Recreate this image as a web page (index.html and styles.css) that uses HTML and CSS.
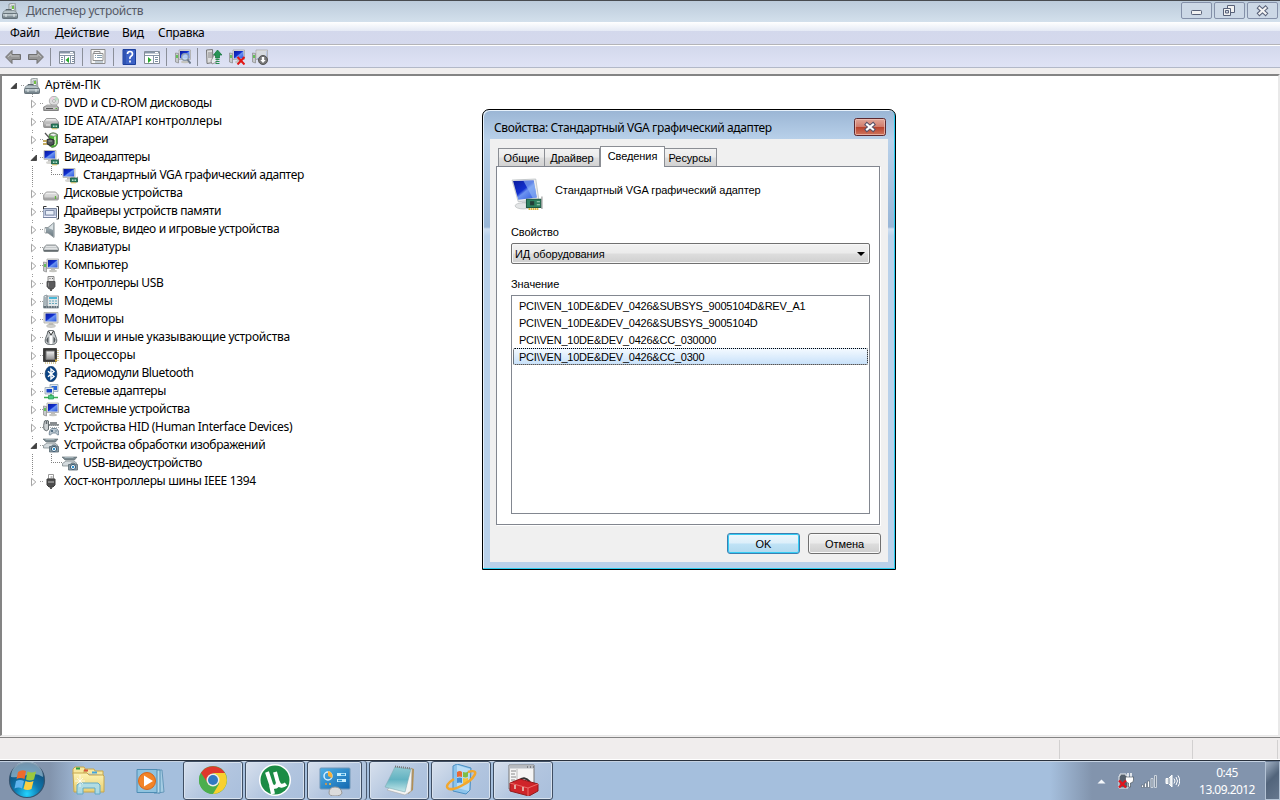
FILE: index.html
```html
<!DOCTYPE html>
<html lang="ru">
<head>
<meta charset="utf-8">
<title>Диспетчер устройств</title>
<link rel="stylesheet" href="styles.css">
</head>
<body>
<svg class="defs" width="0" height="0">
<defs>
<linearGradient id="gScr" x1="0" y1="0" x2="1" y2="1"><stop offset="0" stop-color="#0a1a9a"/><stop offset=".45" stop-color="#1230d0"/><stop offset=".55" stop-color="#6c93f0"/><stop offset="1" stop-color="#2a55e0"/></linearGradient>
<linearGradient id="gGray" x1="0" y1="0" x2="0" y2="1"><stop offset="0" stop-color="#f4f4f4"/><stop offset="1" stop-color="#8f8f8f"/></linearGradient>
<linearGradient id="gSteel" x1="0" y1="0" x2="0" y2="1"><stop offset="0" stop-color="#b9c6cc"/><stop offset="1" stop-color="#66757d"/></linearGradient>
<radialGradient id="gOrb" cx=".5" cy=".9" r=".9"><stop offset="0" stop-color="#23d4ff"/><stop offset=".4" stop-color="#0e78ae"/><stop offset="1" stop-color="#123e66"/></radialGradient>
<linearGradient id="gFold" x1="0" y1="0" x2="0" y2="1"><stop offset="0" stop-color="#fdf3b4"/><stop offset="1" stop-color="#e9cf72"/></linearGradient>
<linearGradient id="gNote" x1="0" y1="0" x2="0" y2="1"><stop offset="0" stop-color="#8fc9d2"/><stop offset=".5" stop-color="#63b3c2"/><stop offset="1" stop-color="#c5e8ea"/></linearGradient>
<linearGradient id="gPanel" x1="0" y1="0" x2="1" y2="1"><stop offset="0" stop-color="#4fb0e6"/><stop offset="1" stop-color="#1268b0"/></linearGradient>
</defs>
<symbol id="pc" viewBox="0 0 16 16"><path d="M7 1l6-1 1 10-7 1z" fill="#e4e6e4" stroke="#7b8588" stroke-width=".8"/><path d="M9 3l3-.5.4 5-3 .5z" fill="#fff" stroke="#9aa"/><rect x="10" y="3" width="2" height="3" fill="#74c043"/><path d="M4 8V6.500h5V8" fill="none" stroke="#59666c"/><path d="M1 9l2-1.500h9l3 2.500v1H1z" fill="#b5c1c6" stroke="#738087" stroke-width=".6"/><rect x=".5" y="10.500" width="15" height="5" rx=".8" fill="url(#gSteel)" stroke="#556269" stroke-width=".8"/><path d="M1 12h14" stroke="#d6e0e2" stroke-width=".7"/><path d="M4 11v3M12 11v3" stroke="#e8eeee"/></symbol>
<symbol id="card" viewBox="0 0 8 7"><path d="M.5 1.500h7v4h-7z" fill="#2b8060" stroke="#195844" stroke-width=".8"/><path d="M2 3h1.500v1.500H2zM4.500 3H6v1.500H4.500z" fill="#b9dccb"/><path d="M1 6.500h5" stroke="#dcb838"/><path d="M7.500 0v2" stroke="#888"/></symbol>
<symbol id="mon" viewBox="0 0 16 16"><path d="M1 .5h14v10.500H1z" fill="#e5e5df" stroke="#aaaaa3" stroke-width=".8"/><path d="M2.500 1.500h11v8h-11z" fill="url(#gScr)"/><path d="M6 11h4l.7 2H5.300z" fill="#bcbcb5"/><ellipse cx="8" cy="14" rx="4.500" ry="1.400" fill="#d6d6cf" stroke="#aaa" stroke-width=".6"/></symbol>
<symbol id="vga" viewBox="0 0 16 16"><path d="M1 .5h12v9H1z" fill="#dbdbd6" stroke="#b2b2ae" stroke-width=".8"/><path d="M1.500 1h10.500v7.500H1.500z" fill="url(#gScr)"/><path d="M5 10h4v2H5z" fill="#bbb"/><ellipse cx="7" cy="12.500" rx="4" ry="1.500" fill="#d6d6d2"/><use href="#card" x="8" y="8.500" width="8" height="7"/></symbol>
<symbol id="dvd" viewBox="0 0 16 16"><circle cx="11" cy="5" r="4.700" fill="#dededf" stroke="#999" stroke-width=".7"/><path d="M11 5l2-4.200A4.700 4.700 0 0 1 15.300 4z" fill="#b9e3c1"/><path d="M11 5L7.300 2.500 10 .6z" fill="#f0cde0"/><circle cx="11" cy="5" r="1.400" fill="#fff" stroke="#888" stroke-width=".6"/><path d="M1 11l3-2h9l2.500 2v3.500H.6V11z" fill="#c6c6c6" stroke="#888" stroke-width=".7"/><path d="M1 11h14v3.500H1z" fill="url(#gGray)" stroke="#777" stroke-width=".7"/><path d="M3 12.500h7" stroke="#555"/><path d="M12.500 12.500H14" stroke="#54b637"/></symbol>
<symbol id="ide" viewBox="0 0 16 16"><path d="M.6 8l2.800-3.500h9.200L15.400 8v4.500q0 1-1 1H1.600q-1 0-1-1z" fill="url(#gGray)" stroke="#858585" stroke-width=".8"/><path d="M1 8h14" stroke="#aaa" stroke-width=".6"/><path d="M3 11h4" stroke="#eee"/><use href="#card" x="8" y="8.500" width="8" height="7"/></symbol>
<symbol id="bat" viewBox="0 0 16 16"><path d="M6 2.500Q10-1 14.500 2.500v9Q13 15.500 9 15.500l-3-2z" fill="#4db238" stroke="#4e6d45" stroke-width=".7"/><path d="M6.500 3Q10-.5 14 3q-3 2.500-7.500 0z" fill="#f1f4f1" stroke="#777" stroke-width=".6"/><path d="M11 4.800l2-.5v8.200l-2 1z" fill="#c8f0af"/><path d="M4 7.500q3-1.500 7 .5v4q-3 3-7 0z" fill="#52575b" stroke="#292c2e"/><path d="M2 1l4 4.500M5.500 8.500l4 0" fill="none" stroke="#555" stroke-width="1.200"/><path d="M5.500 9h3.500" stroke="#a1a7aa"/><path d="M0 9h4M0 12h4" stroke="#b19132" stroke-width="1.300"/></symbol>
<symbol id="disk" viewBox="0 0 16 16"><path d="M.6 9l2.800-3h9.200l2.800 3v4q0 1-1 1H1.600q-1 0-1-1z" fill="#eee" stroke="#888" stroke-width=".8"/><path d="M1 9h14v4.500H1z" fill="url(#gGray)" stroke="#999" stroke-width=".5"/><path d="M12.500 10v3" stroke="#62b23d" stroke-width="1.300"/></symbol>
<symbol id="mem" viewBox="0 0 16 16"><path d="M0 4.500h13.500v9H0z" fill="#bcc6db" stroke="#7885a0"/><path d="M2.500 6.500h8.500v4.500H2.500z" fill="#e8eef8" stroke="#8490ac"/><path d="M13.500 2.500h2v12.500h-2M.5 5V2.500h3" fill="none" stroke="#333"/><path d="M1 12.500h12" stroke="#eef"/></symbol>
<symbol id="snd" viewBox="0 0 16 16"><path d="M2 5.500h3L11 .5v15L5 11H2z" fill="url(#gSteel)" stroke="#858d91" stroke-width=".8"/><path d="M5.500 6L10 2v6z" fill="#dbe2e5"/><path d="M2.500 6.500v4" stroke="#eee"/><path d="M11 1v14" stroke="#aeb7bb"/></symbol>
<symbol id="kbd" viewBox="0 0 16 16"><path d="M.5 9q0-2 3-4h9q3 2 3 4v1.500q0 1-1 1h-13q-1 0-1-1z" fill="#c6cacc" stroke="#777e82" stroke-width=".8"/><path d="M3.500 6.500h9M2.500 8.500h11" stroke="#fff" stroke-dasharray="1 1"/><path d="M1 10.700h14" stroke="#656c70" stroke-width="1.400"/></symbol>
<symbol id="comp" viewBox="0 0 16 16"><path d="M4 1h11.500v9.500H4z" fill="#e3e3df" stroke="#aaa" stroke-width=".8"/><path d="M5 2h9.500v7.500H5z" fill="url(#gScr)"/><path d="M8 10.500h4V13H8z" fill="#bbb"/><ellipse cx="10" cy="13" rx="4" ry="1.200" fill="#c5c5c0"/><path d="M.5 4l3 .5V14l-3-1z" fill="#c7cacc" stroke="#888" stroke-width=".7"/><path d="M2 6v3" stroke="#43bc35" stroke-width="1.500"/></symbol>
<symbol id="usb" viewBox="0 0 16 16"><path d="M5 .5h6V6H5z" fill="#e5e5e5" stroke="#888"/><path d="M6.500 2.500h1M9 2.500h1" stroke="#666"/><path d="M4 5.500h8v5l-2 2.500H6l-2-2.500z" fill="#5a5a5c" stroke="#424244" stroke-width=".8"/><path d="M5.500 6.500v4" stroke="#8d8d8d"/><path d="M8 13v2" stroke="#555" stroke-width="2"/></symbol>
<symbol id="modem" viewBox="0 0 16 16"><path d="M1 2l3-1v12H.5zM4 2h11.500v12H.5v-2H4z" fill="#e2e7e9" stroke="#7d8b93" stroke-width=".8"/><path d="M6 3h8v2H6z" fill="#4bb7d7"/><path d="M6 7h8M6 9.500h8" stroke="#69a9bd" stroke-width="1.200" stroke-dasharray="2 1"/><path d="M1 13h14" stroke="#637179" stroke-width="2" stroke-dasharray="2 .6"/><path d="M2 3v8" stroke="#9aa7ad" stroke-width="1.500"/></symbol>
<symbol id="mouse" viewBox="0 0 16 16"><path d="M5 1q3-1.500 6 0 .5 3 2.500 7.500c1 4-1 5.800-3.500 5.800H6c-3 0-4.500-1.800-3.500-5.800Q4.500 4 5 1z" fill="#c9cdcf" stroke="#62696d"/><path d="M5.500 1l2.500 4 2.500-4" fill="#fff" stroke="#333"/><path d="M3.500 9L5.500 6.500v6.500Q3 12 3.500 9zM12.500 9l-2-2.500v6.500q2-1 2-4z" fill="#535a5e"/><path d="M8 6v8" stroke="#fff" stroke-width="2.500"/></symbol>
<symbol id="cpu" viewBox="0 0 16 16"><path d="M.5.5h13v13H.5z" fill="#393938" stroke="#444"/><path d="M3 3h8.500v8.500H3z" fill="url(#gGray)" stroke="#777"/><path d="M15 2v12M2 15h12" stroke="#b59c3e" stroke-dasharray="1 1"/><path d="M12 12.500h2" stroke="#d7ae37" stroke-width="2"/></symbol>
<symbol id="bt" viewBox="0 0 16 16"><ellipse cx="8" cy="8" rx="5.900" ry="7.700" fill="#0a4486" stroke="#113058" stroke-width=".6"/><path d="M5 5.200l6 5.300-3 2.500V3l3 2.500-6 5.300" fill="none" stroke="#fff" stroke-width="1.400"/></symbol>
<symbol id="net" viewBox="0 0 16 16"><path d="M7 .5h8v7H7z" fill="#dee7ed" stroke="#8ca1b1" stroke-width=".7"/><path d="M8.500 2H14v4H8.500z" fill="#2767db"/><path d="M2 3.500h8.500v6.500H2z" fill="#e4ebef" stroke="#889aa8" stroke-width=".7"/><path d="M3.500 5H9v3.500H3.500z" fill="#1643c7"/><path d="M8 10v3M1 13.500h14" stroke="#3dae50" stroke-width="1.600"/><path d="M5.500 11.500h5v3.500h-5z" fill="#48ca80" stroke="#2b9656" stroke-width=".7"/></symbol>
<symbol id="hid" viewBox="0 0 16 16"><path d="M1.500 1q2-1.500 4 0v8.500Q3.500 12 1 9.500 0 6 1.500 1z" fill="#ccd0d2" stroke="#62696c"/><path d="M3.500 1v3M7 3h7M6 5h10" stroke="#61686c" stroke-width="1.500"/><path d="M7 5.500h9M7 7.500h9" stroke="#abb1b4" stroke-dasharray="1 1"/><path d="M6.500 15c-1-2 1-6.500 2.500-6.500h4c2 0 3.500 4.500 2.300 6.500-.8.800-1.800-2-2.800-2H10c-1 0-2.500 2.500-3.500 2z" fill="#bac7d0" stroke="#5f7586" stroke-width=".8"/><path d="M9 10v2M8 11h2M13 10.500v1" stroke="#30506b"/></symbol>
<symbol id="img" viewBox="0 0 16 16"><path d="M0 1h15l-2.500 3H3z" fill="#7c8a90" stroke="#59666b" stroke-width=".6"/><path d="M2.500 1.500h9" stroke="#a6b5bb"/><path d="M.5 7.500L4 5h8l3 2.500-2 1H7V10H.5z" fill="#d4dadd" stroke="#737e83" stroke-width=".7"/><path d="M6.500 8.500h2l1-1.500h3l1 1.500h2V14h-9z" fill="#8b9ba4" stroke="#586871" stroke-width=".8"/><circle cx="11" cy="11" r="2.600" fill="#fff" stroke="#385972"/><circle cx="11" cy="11" r="1.200" fill="#2b8ecb"/></symbol>
<symbol id="fire" viewBox="0 0 16 16"><path d="M5.500.5h5V5h-5z" fill="#fff" stroke="#999"/><path d="M7.500 2h2v2h-2z" fill="#bbb"/><path d="M4 5h8v6l-2 2H6l-2-2z" fill="#4c4c4d" stroke="#3e3e3e"/><path d="M5 8h6" stroke="#c1c1c1"/><path d="M8 13v2" stroke="#555" stroke-width="2"/></symbol>
<symbol id="closed" viewBox="0 0 8 10"><path d="M1.500 1.200L5.800 5 1.500 8.800z" fill="#fff" stroke="#a3a3a3"/></symbol>
<symbol id="open" viewBox="0 0 8 10"><path d="M6.500 2v5.500H1z" fill="#404040" stroke="#262626" stroke-width=".7"/></symbol>
</svg>

<div class="desktop">
  <header class="titlebar">
    <svg class="i16"><use href="#pc"/></svg><span>Диспетчер устройств</span>
    <div class="winbtns">
      <svg viewBox="0 0 31 17"><rect class="wb" x=".5" y=".5" width="30" height="16" rx="1.500"/><rect x="10.500" y="8.500" width="10" height="4" rx=".8" fill="#f1f1f1" stroke="#586178"/></svg>
      <svg viewBox="0 0 31 17"><rect class="wb" x=".5" y=".5" width="30" height="16" rx="1.500"/><path d="M13.500 3.500h7v7h-7z" fill="#f1f1f1" stroke="#586178"/><path d="M9.500 6.500h7v7h-7z" fill="#f1f1f1" stroke="#586178"/><path d="M11.500 8.500h3v2.500h-3z" fill="#d0d8e5" stroke="#586178"/></svg>
      <svg viewBox="0 0 31 17"><rect class="wb" x=".5" y=".5" width="30" height="16" rx="1.500"/><path d="M12.500 6l6 5.500M18.500 6l-6 5.500" stroke="#586178" stroke-width="4.200" stroke-linecap="square"/><path d="M12.500 6l6 5.500M18.500 6l-6 5.500" stroke="#f4f4f4" stroke-width="2.200" stroke-linecap="square"/></svg>
    </div>
  </header>
  <nav class="menu"><span class="m1">Файл</span><span class="m2">Действие</span><span class="m3">Вид</span><span>Справка</span></nav>
  <div class="toolbar">
    <svg class="tb arrow" viewBox="0 0 16 16"><path d="M.6 8L7 1.500v4h8.500v5H7v4z" fill="#969696" stroke="#707070"/><path d="M3 8l3-3v2h8" fill="none" stroke="#bbb"/></svg>
    <svg class="tb next" viewBox="0 0 16 16"><path d="M15.400 8L9 1.500v4H.5v5H9v4z" fill="#969696" stroke="#707070"/><path d="M2 7h8V5l3 3" fill="none" stroke="#bbb"/></svg>
    <i class="sep s1"></i>
    <svg class="tb low" viewBox="0 0 16 16"><path d="M.5 1.500h15v12H.5z" fill="#fff" stroke="#848c96"/><path d="M1 2.500h14" stroke="#8795a8" stroke-width="2"/><path d="M11 2.500h3" stroke="#fff"/><path d="M1 5.500h14M5.500 6v8M11.500 6v8" stroke="#8795a8"/><path d="M2 7.500h2M2 9.500h2M2 11.500h2M13 7.500h2M13 9.500h2M13 11.500h2" stroke="#7a8da2"/><path d="M10 7v6l-3.500-3z" fill="#25a92c"/></svg>
    <i class="sep s2"></i>
    <svg class="tb" viewBox="0 0 16 16"><path d="M1 .5h14v14H1z" fill="#f6f6f6" stroke="#8b8b8b"/><path d="M3 4.500h10v7H3z" fill="#fff" stroke="#909090"/><path d="M4 4V2.500h6V4" fill="none" stroke="#909090"/><path d="M5 6.500h1M7 6.500h5M5 8.500h1M7 8.500h5" stroke="#849eae"/><path d="M5 13h8" stroke="#8fa5b5"/></svg>
    <i class="sep s3"></i>
    <svg class="tb" viewBox="0 0 16 16"><path d="M2 .5h12.500v15H2z" fill="#3c61c5" stroke="#1b3f9d"/><path d="M4 1v14" stroke="#23479f"/><path d="M6.500 5q0-2.500 2.500-2.500T11.500 5q0 1.300-1.500 2.300T9 10M9 11.500v2" fill="none" stroke="#fff" stroke-width="1.700"/></svg>
    <svg class="tb q low" viewBox="0 0 16 16"><path d="M.5 1.500h15v12H.5z" fill="#fff" stroke="#848c96"/><path d="M1 2.500h14" stroke="#8795a8" stroke-width="2"/><path d="M11 2.500h3" stroke="#fff"/><path d="M1 5.500h14M9.500 6v8" stroke="#8795a8"/><path d="M11 7.500h3M11 9.500h3M11 11.500h3" stroke="#7a8da2"/><path d="M4 7v6l3.500-3z" fill="#25a92c"/></svg>
    <i class="sep s4"></i>
    <svg class="tb" viewBox="0 0 16 16"><use href="#comp"/><circle cx="10" cy="8" r="3.400" fill="#d5eafb" fill-opacity=".7" stroke="#8a99aa" stroke-width="1.300"/><path d="M12.500 10.500l3 4" stroke="#6b7889" stroke-width="2"/></svg>
    <i class="sep s5"></i>
    <svg class="tb" viewBox="0 0 16 16"><path d="M.5 1l6-.5.500 13-6 1z" fill="#ddd" stroke="#777"/><path d="M2 4h4M2 6h4M2 8h4" stroke="#888"/><path d="M5 12l3-6 3 1v6l-5 2z" fill="#e9ecef" stroke="#777" stroke-width=".7"/><path d="M11.500 1L16 6h-2.500v3h-4V6H7.500z" fill="#279455" stroke="#16733b" stroke-width=".7"/><path d="M9.500 10.500h4M9.500 12.500h4M9.500 14.500h4" stroke="#278d4f"/></svg>
    <svg class="tb q" viewBox="0 0 16 16"><use href="#comp"/><path d="M8.500 8l7 7.500M15.500 8l-7 7.500" stroke="#e21616" stroke-width="2"/></svg>
    <svg class="tb q" viewBox="0 0 16 16"><use href="#comp"/><path d="M5 2h9.500v7H5z" fill="#d7dade"/><circle cx="11" cy="11" r="4.500" fill="#777" stroke="#555"/><path d="M9.800 8h2.400v3h1.500L11 14l-2.700-3h1.500z" fill="#fff"/></svg>
  </div>
  <main class="tree">
    <div class="row root"><svg class="ar"><use href="#open"/></svg><svg class="i16"><use href="#pc"/></svg><span class="lb">Артём-ПК</span></div>
    <div class="row"><svg class="ar"><use href="#closed"/></svg><svg class="i16"><use href="#dvd"/></svg><span class="lb mid">DVD и CD-ROM дисководы</span></div>
    <div class="row"><svg class="ar"><use href="#closed"/></svg><svg class="i16"><use href="#ide"/></svg><span class="lb wide">IDE ATA/ATAPI контроллеры</span></div>
    <div class="row"><svg class="ar"><use href="#closed"/></svg><svg class="i16"><use href="#bat"/></svg><span class="lb tight">Батареи</span></div>
    <div class="row"><svg class="ar"><use href="#open"/></svg><svg class="i16"><use href="#vga"/></svg><span class="lb tight">Видеоадаптеры</span></div>
    <div class="row child"><i class="elbow"></i><svg class="i16"><use href="#vga"/></svg><span class="lb snug">Стандартный VGA графический адаптер</span></div>
    <div class="row"><svg class="ar"><use href="#closed"/></svg><svg class="i16"><use href="#disk"/></svg><span class="lb">Дисковые устройства</span></div>
    <div class="row"><svg class="ar"><use href="#closed"/></svg><svg class="i16"><use href="#mem"/></svg><span class="lb snug">Драйверы устройств памяти</span></div>
    <div class="row"><svg class="ar"><use href="#closed"/></svg><svg class="i16"><use href="#snd"/></svg><span class="lb">Звуковые, видео и игровые устройства</span></div>
    <div class="row"><svg class="ar"><use href="#closed"/></svg><svg class="i16"><use href="#kbd"/></svg><span class="lb snug">Клавиатуры</span></div>
    <div class="row"><svg class="ar"><use href="#closed"/></svg><svg class="i16"><use href="#comp"/></svg><span class="lb mid">Компьютер</span></div>
    <div class="row"><svg class="ar"><use href="#closed"/></svg><svg class="i16"><use href="#usb"/></svg><span class="lb snug">Контроллеры USB</span></div>
    <div class="row"><svg class="ar"><use href="#closed"/></svg><svg class="i16"><use href="#modem"/></svg><span class="lb mid">Модемы</span></div>
    <div class="row"><svg class="ar"><use href="#closed"/></svg><svg class="i16"><use href="#mon"/></svg><span class="lb mid">Мониторы</span></div>
    <div class="row"><svg class="ar"><use href="#closed"/></svg><svg class="i16"><use href="#mouse"/></svg><span class="lb mid">Мыши и иные указывающие устройства</span></div>
    <div class="row"><svg class="ar"><use href="#closed"/></svg><svg class="i16"><use href="#cpu"/></svg><span class="lb wide">Процессоры</span></div>
    <div class="row"><svg class="ar"><use href="#closed"/></svg><svg class="i16"><use href="#bt"/></svg><span class="lb snug">Радиомодули Bluetooth</span></div>
    <div class="row"><svg class="ar"><use href="#closed"/></svg><svg class="i16"><use href="#net"/></svg><span class="lb snug">Сетевые адаптеры</span></div>
    <div class="row"><svg class="ar"><use href="#closed"/></svg><svg class="i16"><use href="#comp"/></svg><span class="lb">Системные устройства</span></div>
    <div class="row"><svg class="ar"><use href="#closed"/></svg><svg class="i16"><use href="#hid"/></svg><span class="lb">Устройства HID (Human Interface Devices)</span></div>
    <div class="row"><svg class="ar"><use href="#open"/></svg><svg class="i16"><use href="#img"/></svg><span class="lb">Устройства обработки изображений</span></div>
    <div class="row child"><i class="elbow"></i><svg class="i16"><use href="#img"/></svg><span class="lb snug">USB-видеоустройство</span></div>
    <div class="row last"><svg class="ar"><use href="#closed"/></svg><svg class="i16"><use href="#fire"/></svg><span class="lb">Хост-контроллеры шины IEEE 1394</span></div>
  </main>
  <div class="status"><i></i><i class="p2"></i><i class="p3"></i></div>
  <footer class="taskbar">
    <svg class="orb" viewBox="0 0 38 38"><circle cx="19" cy="19" r="17.500" fill="url(#gOrb)" stroke="#36546f" stroke-width="1.200"/><path d="M3 16a16 16 0 0 1 32 0q-7-5-16-2T3 16z" fill="#c4dae8" opacity=".55"/><path d="M10 11q4-3 8-1l-1.500 8q-4-2-8 0z" fill="#ee6a2c"/><path d="M19.500 10.500q4 2 8.500 0l-2 8q-4 2-8 0z" fill="#9cc83d"/><path d="M8 20q4-2 8 0l-2 7.500q-3.500-2-7.500 0z" fill="#5fb4ee"/><path d="M17.500 20q4 2 8 0l-2 8q-4 2-8 0z" fill="#fbcf40"/></svg>
    <div class="pin p-exp"><svg viewBox="0 0 34 34"><path d="M1 9V4l2-2h9l2 3v3M12 8V5l2-1h8l1 2h8v4" fill="#f6e79d" stroke="#c6a64d"/><path d="M4 3.500h4" stroke="#2b9e3e" stroke-width="2"/><path d="M12 5.500h4" stroke="#d5553a" stroke-width="2"/><path d="M20 7.500h5" stroke="#42a4dd" stroke-width="2"/><path d="M1 8h14l2 2h14l1 1v16H2z" fill="url(#gFold)" stroke="#c6a64d"/><path d="M5 29V20l3-2h18l2 2v9h-5v-6H11v6z" fill="#a8dced" fill-opacity=".9" stroke="#62a9c5"/><path d="M8 10v12M3 16h10M5 13l6 6M11 13l-6 6" stroke="#fff" stroke-width=".7"/></svg></div>
    <div class="pin p-wmp"><svg viewBox="0 0 34 34"><path d="M20 5h6l2 22-6 1z" fill="#a4cce3" stroke="#6698ba"/><path d="M18 5h6v23h-6z" fill="#b9dced" stroke="#548fb4"/><path d="M1 4.500h20v23H1z" fill="#8fc3df" stroke="#4e8db4"/><circle cx="11" cy="16" r="8.500" fill="#f28427" stroke="#d8661a"/><path d="M8 10.500l9 5.500-9 5.500z" fill="#fff"/></svg></div>
    <div class="task"><svg viewBox="0 0 32 32"><circle cx="16" cy="16" r="14" fill="#4cae4d"/><path d="M3.900 9A14 14 0 0 1 28 9H16z" fill="#e0372c"/><path d="M3.900 9L11 20l5-11z" fill="#e0372c"/><path d="M3.900 9L12 21l4 9A14 14 0 0 1 3.900 9z" fill="#4cae4d"/><path d="M28 9a14 14 0 0 1-12 21l6-10-2-9-4-2z" fill="#f8d02f"/><circle cx="16" cy="16" r="6.500" fill="#f0eee9"/><circle cx="16" cy="16" r="5" fill="#3279c2"/></svg></div>
    <div class="task"><svg viewBox="0 0 32 32"><circle cx="16" cy="16" r="16" fill="#fff"/><circle cx="16" cy="16" r="14.500" fill="#1c8c45"/><path d="M8 8l4 12c1 4 6 4 7-1l-3-11M19 18c1 4 4 5 8 2M12 21l2 9" fill="none" stroke="#fff" stroke-width="4"/></svg></div>
    <div class="task stack"><svg viewBox="0 0 32 32"><rect x="1" y="4" width="30" height="21" rx="1" fill="url(#gPanel)" stroke="#7197b8"/><circle cx="9" cy="12" r="4" fill="none" stroke="#d6efff" stroke-width="1.500"/><path d="M9 12V7a5 5 0 0 1 4 7z" fill="#f6b03c"/><path d="M18 10.500h9M18 16.500h9" stroke="#c7efff" stroke-width="3"/><path d="M22 10.500h4M19 16.500h4" stroke="#298fcf" stroke-width="1.500"/><circle cx="7" cy="20" r="1" fill="#ef9a32"/><circle cx="11" cy="20" r="1" fill="#f6c04d"/><path d="M10 29q0-6 6-6t7 6q-1 3-7 3t-6-3z" fill="#dcdcdc" stroke="#999"/></svg></div>
    <div class="task gap"><svg viewBox="0 0 32 32"><path d="M28 4l3 1-1 21-5 4z" fill="#b18f55"/><path d="M27 5l2 0-1 22-6 4-18-5z" fill="#f4f4f2" stroke="#aaa" stroke-width=".6"/><path d="M12 3l16 2-6 23-20-5z" fill="url(#gNote)" stroke="#7dabb3" stroke-width=".6"/><path d="M12 2.500l16 2" stroke="#777" stroke-width="2" stroke-dasharray="1 1"/></svg></div>
    <div class="task"><svg viewBox="0 0 32 32"><path d="M8 2l4-2 14 4-1 22-4 4-13-3z" fill="#8cc3eb" stroke="#4a8fc3"/><path d="M12 1l13 4-1 22-12-3z" fill="#b8dcf6"/><path d="M12 8q3-2 5 0v5q-2-1-5 0z" fill="#ea6835"/><path d="M18 8q3 1 5-.500v5q-2 1.500-5 .500z" fill="#80bd45"/><path d="M12 14q3-1 5 0v5q-2-1-5 0z" fill="#438fd8"/><path d="M18 14q3 1 5-.500v5q-2 1.500-5 .500z" fill="#f8c23c"/><path d="M9 15c-13 8-6 14 7 7 14-7 20-18 7-14" fill="none" stroke="#f2a72e" stroke-width="2.500"/></svg></div>
    <div class="task"><svg viewBox="0 0 32 32"><path d="M2 1h25v24H2z" fill="#f5f5f5" stroke="#777"/><path d="M2 3h25" stroke="#b7bbc1" stroke-width="3"/><path d="M20 3h1M23 3h1M26 3h1" stroke="#444"/><path d="M4 7h5M4 10h4M4 13h5M4 16h4" stroke="#888"/><path d="M10 5v18" stroke="#bbb"/><path d="M12 17q5-6 11 1" fill="none" stroke="#333" stroke-width="2"/><path d="M3 19l10-4 18 5v7l-9 5-19-5z" fill="#cf2429" stroke="#92191c"/><path d="M3 19l18 5 10-4M21 24v8" fill="none" stroke="#ee6b68"/><path d="M8 21v4M16 23v4" stroke="#e8d6c8" stroke-width="1.500"/></svg></div>
    <div class="tray">
      <svg class="t1" viewBox="0 0 8 5"><path d="M4 .5L8 4.500H0z" fill="#f5f8fb"/></svg>
      <svg class="t2" viewBox="0 0 16 18"><path d="M2 4V2h6v2h2v12H1V4z" fill="#55606c" stroke="#e9edf0"/><path d="M10 1v4M13 1v4" stroke="#fff" stroke-width="1.500"/><path d="M7.500 5h8v3q0 3-3 3v4h-2v-4q-3 0-3-3z" fill="#fff" stroke="#39434e" stroke-width=".6"/><path d="M1 8.500l7 7M8 8.500l-7 7" stroke="#e3131b" stroke-width="2.300"/></svg>
      <svg class="t3" viewBox="0 0 17 14"><path d="M.5 11h2v2.500h-2zM3.500 9h2v4.500h-2zM6.500 7h2v6.500h-2z" fill="#fff" stroke="#53606f" stroke-width=".6"/><path d="M10 4.500h2v9h-2zM13.500 1.500h2v12h-2z" fill="#7a8898" stroke="#d3dae2" stroke-width=".9"/></svg>
      <svg class="t4" viewBox="0 0 15 14"><path d="M1 4.500h2.500L7 1v12L3.500 9.500H1z" fill="#e9edf0" stroke="#fff"/><path d="M4 4v6" stroke="#78889a"/><path d="M9 4.500q2 2.500 0 5M11 3q3 4 0 8M13 1.500q3.500 5.500 0 11" fill="none" stroke="#fff"/></svg>
      <div class="clock"><span>0:45</span><span>13.09.2012</span></div>
      <i class="show"></i>
    </div>
  </footer>

  <section class="dialog">
    <div class="dtitle"><span>Свойства: Стандартный VGA графический адаптер</span><svg class="close" viewBox="0 0 32 18"><defs><linearGradient id="gClose" x1="0" y1="0" x2="0" y2="1"><stop offset="0" stop-color="#e2aa9c"/><stop offset=".48" stop-color="#d17c6c"/><stop offset=".5" stop-color="#b6402b"/><stop offset="1" stop-color="#d17961"/></linearGradient></defs><rect x=".5" y=".5" width="31" height="17" rx="2" fill="url(#gClose)" stroke="#5c2930"/><rect x="1.500" y="1.500" width="29" height="15" rx="1" fill="none" stroke="#f0c4b9" stroke-opacity=".7"/><path d="M13 6.500l6 5M19 6.500l-6 5" stroke="#585269" stroke-width="4.200" stroke-linecap="square"/><path d="M13 6.500l6 5M19 6.500l-6 5" stroke="#fff" stroke-width="2.100" stroke-linecap="square"/></svg></div>
    <div class="client">
      <div class="tabs"><span class="tab a">Общие</span><span class="tab b">Драйвер</span><span class="tab on">Сведения</span><span class="tab d">Ресурсы</span></div>
      <div class="page">
        <div class="devhead"><svg viewBox="0 0 32 32"><path d="M1 2l23-1 3 20-20 2z" fill="#eceded" stroke="#b3b8bb" stroke-width=".7"/><path d="M2 3l20-.5 3 16.500-18 2z" fill="url(#gScr)"/><path d="M12 2.700l10-.2 3 16.500-4 .5z" fill="#8fb5f4" opacity=".65"/><path d="M11 22h8l2 5H10z" fill="#d1d5d7"/><ellipse cx="12" cy="27" rx="8" ry="3" fill="#e3e5e6" stroke="#b8bcbe" stroke-width=".7"/><path d="M15 20.500h14v8H15z" fill="#2e815f" stroke="#1d5742"/><path d="M18.500 22.500h4v4h-4z" fill="#233e38"/><path d="M25 23h3M25 26h3" stroke="#a8d4bc"/><path d="M17 30h10" stroke="#dab43e" stroke-width="2" stroke-dasharray="1.500 .5"/><path d="M30 18v12" stroke="#8d8d8d"/></svg><span>Стандартный VGA графический адаптер</span></div>
        <div class="label l1">Свойство</div>
        <div class="select"><span>ИД оборудования</span><svg viewBox="0 0 8 4"><path d="M0 0h8L4 4z"/></svg></div>
        <div class="label l2">Значение</div>
        <div class="list"><div>PCI\VEN_10DE&amp;DEV_0426&amp;SUBSYS_9005104D&amp;REV_A1</div><div>PCI\VEN_10DE&amp;DEV_0426&amp;SUBSYS_9005104D</div><div>PCI\VEN_10DE&amp;DEV_0426&amp;CC_030000</div><div class="sel">PCI\VEN_10DE&amp;DEV_0426&amp;CC_0300</div></div>
      </div>
      <div class="btns"><button class="ok">OK</button><button>Отмена</button></div>
    </div>
  </section>
</div>
</body>
</html>
```
FILE: styles.css
```css
* { box-sizing: border-box; }
body { margin: 0; font: 12px/18px "Noto Sans", sans-serif; color: #000; overflow: hidden; }
svg { display: block; flex: none; }
.defs { position: absolute; }
.i16 { width: 16px; height: 16px; }
.desktop { position: relative; width: 1280px; height: 800px; display: flex; flex-direction: column; background: #f0eeee; white-space: nowrap; }

.titlebar { height: 22px; border-top: 1px solid #484b50; background: linear-gradient(#bccbdb, #d3e0ec); display: flex; align-items: center; padding-left: 2px; color: #565a66; letter-spacing: -.3px; }
.titlebar .i16 { margin-top: -2px; }
.titlebar span { margin: -1px 0 0 8px; }
.winbtns { margin-left: auto; display: flex; gap: 2px; padding-right: 2px; align-self: flex-start; padding-top: 1px; }
.winbtns svg { width: 31px; height: 17px; }
.wb { fill: #ccd8e6; stroke: #8490a9; }
.menu { height: 23px; border-bottom: 1px solid #b4b4b8; background: linear-gradient(#fff, #e5eaf5 40%, #d3d8ec 42%, #d5d9ed); display: flex; align-items: center; padding-left: 10px; letter-spacing: -.3px; }
.menu .m1 { width: 45px; }
.menu .m2 { width: 67px; letter-spacing: -.1px; }
.menu .m3 { width: 36px; }
.toolbar { height: 23px; border-top: 1px solid #fff; border-bottom: 1px solid #b2b8c8; background: linear-gradient(#d3d8ec, #dfe3f5); display: flex; align-items: center; padding-left: 5px; }
.tb { width: 16px; height: 16px; }
.tb.low { margin-top: 2px; }
.next, .q { margin-left: 7px; }
.sep { width: 1px; height: 18px; background: #8b8f99; margin: 0 8px 0 6px; }
.s2, .s3 { margin-right: 7px; margin-left: 7px; }

.tree { height: 662px; margin-top: 6px; border: 2px solid; border-color: #848484 #e9e9e9 #e9e9e9 #848484; border-width: 2px 2px 1px 2px; background: #fff; letter-spacing: -.34px; }
.row { height: 18px; display: flex; align-items: center; padding-left: 28px; background: repeating-linear-gradient(#9a9a9a 0 1px, transparent 1px 2px) 30px 0 / 1px 4px no-repeat, repeating-linear-gradient(90deg, #9a9a9a 0 1px, transparent 1px 2px) 38px 9px / 3px 1px no-repeat; }
.row.root { padding-left: 8px; background: repeating-linear-gradient(90deg, #9a9a9a 0 1px, transparent 1px 2px) 19px 9px / 3px 1px no-repeat; }
.row.child { padding-left: 49px; background: repeating-linear-gradient(#888 0 1px, transparent 1px 2px) 30px 0 / 1px 18px no-repeat; }
.ar { width: 8px; height: 10px; margin: 2px 5px 0 0; }
.row.root .ar { margin-right: 6px; }
.row .i16 { margin-top: 1px; }
.lb { margin-left: 5px; }
.lb.snug { letter-spacing: -.39px; }
.lb.mid { letter-spacing: -.25px; }
.lb.wide { letter-spacing: -.08px; }
.lb.tight { letter-spacing: -.53px; }
.row.root .lb { letter-spacing: -.1px; }
.elbow { width: 11px; height: 9px; align-self: flex-start; border-left: 1px dotted #808080; border-bottom: 1px dotted #808080; }

.status { height: 23px; margin-top: 1px; border-top: 1px solid #848484; display: flex; background: #f0eded; border-bottom: 1px solid #fff; }
.status i { width: 1060px; border-right: 1px solid #d2d0d0; margin-top: 2px; }
.status .p2 { width: 133px; }
.status .p3 { width: 85px; }

.taskbar { height: 40px; border-top: 1px solid #29313d; box-shadow: inset 0 1px #c5d2e2; display: flex; background: linear-gradient(90deg, #8294ad 0, #8294ad 50px, #a5bfdd 85px, #a5bfdd 1050px, #8294ad 1092px); }
.orb { width: 38px; height: 38px; margin: 0 0 0 8px; }
.pin svg { width: 34px; height: 34px; margin-top: 4px; }
.p-exp { margin-left: 26px; }
.p-wmp { margin-left: 30px; width: 47px; }
.task { width: 60px; height: 39px; margin-right: 2px; border: 1px solid #3f4e63; border-radius: 3px; background: linear-gradient(135deg, #d7e0ed, #b2c5df 55%, #a9bfdc); box-shadow: inset 0 0 0 1px #d8e2ee; display: flex; justify-content: center; padding-top: 2px; }
.task svg { width: 32px; height: 32px; }
.task.stack { width: 55px; box-shadow: inset 0 0 0 1px #d8e2ee, 4px 0 #afc3dc, 5px 0 #4c5b70; }
.task.gap { margin-left: 5px; }
.tray { margin-left: auto; display: flex; align-items: center; color: #fff; }
.t1 { width: 9px; height: 5px; margin-right: 12px; margin-top: 2px; }
.t2 { width: 16px; height: 18px; margin-right: 7px; margin-top: 1px; }
.t3 { width: 17px; height: 14px; margin-right: 7px; }
.t4 { width: 15px; height: 14px; margin-right: 19px; }
.clock { width: 56px; display: flex; flex-direction: column; align-items: center; line-height: 17px; margin-right: 10px; letter-spacing: -.55px; }
.show { width: 15px; height: 39px; border: 1px solid #b4c3d5; border-top-color: #687991; background: linear-gradient(135deg, #a1b0c3, #52647b 45%, #66778e); }

.dialog { position: absolute; left: 482px; top: 109px; width: 414px; height: 461px; border: 1px solid #000; border-radius: 7px 7px 0 0; box-shadow: inset -1px -1px #29cdf0, inset 1px 1px #e6f1fb; background: linear-gradient(#9ab5d4, #b9d1ea 30px, #98b6d7 117px, #cfdff1 119px, #b9d1ea 126px); padding: 0 7px 7px; display: flex; flex-direction: column; }
.dtitle { height: 29px; display: flex; justify-content: space-between; align-items: center; padding: 7px 2px 0 4px; letter-spacing: -.38px; }
.close { width: 32px; height: 18px; margin-top: -2px; }
.client { height: 423px; background: #f0f0f0; padding: 7px 8px 0 6px; font: 11px/13px "Liberation Sans", sans-serif; letter-spacing: -.07px; }
.tabs { display: flex; align-items: flex-end; height: 20px; padding-left: 2px; }
.tab { height: 18px; border: 1px solid #8b8e94; border-left-width: 0; border-bottom: 0; background: linear-gradient(#f2f2f2, #ebebeb 48%, #dedede 52%, #d2d2d2); text-align: center; padding-top: 3px; }
.a { width: 47px; border-left-width: 1px; }
.b { width: 55px; }
.d { width: 53px; }
.tab.on { width: 65px; height: 21px; background: #fff; border-left-width: 1px; margin: 0 0 -1px; z-index: 1; }
.tab.d { margin-left: -1px; }
.page { height: 359px; border: 1px solid #82868f; background: #fff; padding: 11px 9px 0 14px; box-shadow: 1px 1px #fff; }
.devhead { display: flex; height: 34px; }
.devhead svg { width: 33px; height: 33px; }
.devhead span { margin: 6px 0 0 11px; }
.label { height: 13px; }
.l1 { margin-top: 14px; }
.select { margin-top: 4px; height: 21px; border: 1px solid #707070; border-radius: 2px; background: linear-gradient(#f2f2f2, #ebebeb 48%, #dddddd 52%, #cfcfcf); display: flex; align-items: center; justify-content: space-between; padding: 0 4px 0 3px; box-shadow: inset 0 0 0 1px #f7f7f7; }
.select span { padding-top: 2px; }
.select svg { width: 8px; height: 4px; }
.l2 { margin-top: 14px; }
.list { margin-top: 4px; height: 219px; border: 1px solid #828790; padding: 1px 1px 0; line-height: 19px; letter-spacing: -.23px; }
.list div { height: 17px; padding-left: 6px; }
.list .sel { border: 1px dotted #000; line-height: 17px; padding-left: 5px; border-radius: 2px; background: linear-gradient(#f3f9ff, #c9e2fa); }
.btns { display: flex; gap: 8px; justify-content: flex-end; margin: 8px -1px 0 0; }
button { width: 73px; height: 21px; padding: 1px 0 0; font: inherit; letter-spacing: inherit; border: 1px solid #707070; border-radius: 3px; background: linear-gradient(#f2f2f2, #ebebeb 48%, #dddddd 52%, #cfcfcf); box-shadow: inset 0 0 0 1px #f9f9f9; }
.ok { border-color: #3c7fb1; box-shadow: inset 0 0 0 1px #35cdf5; background: linear-gradient(#edf7fc, #dceffa 48%, #c0e3f6 52%, #b1d9ee); }
```
